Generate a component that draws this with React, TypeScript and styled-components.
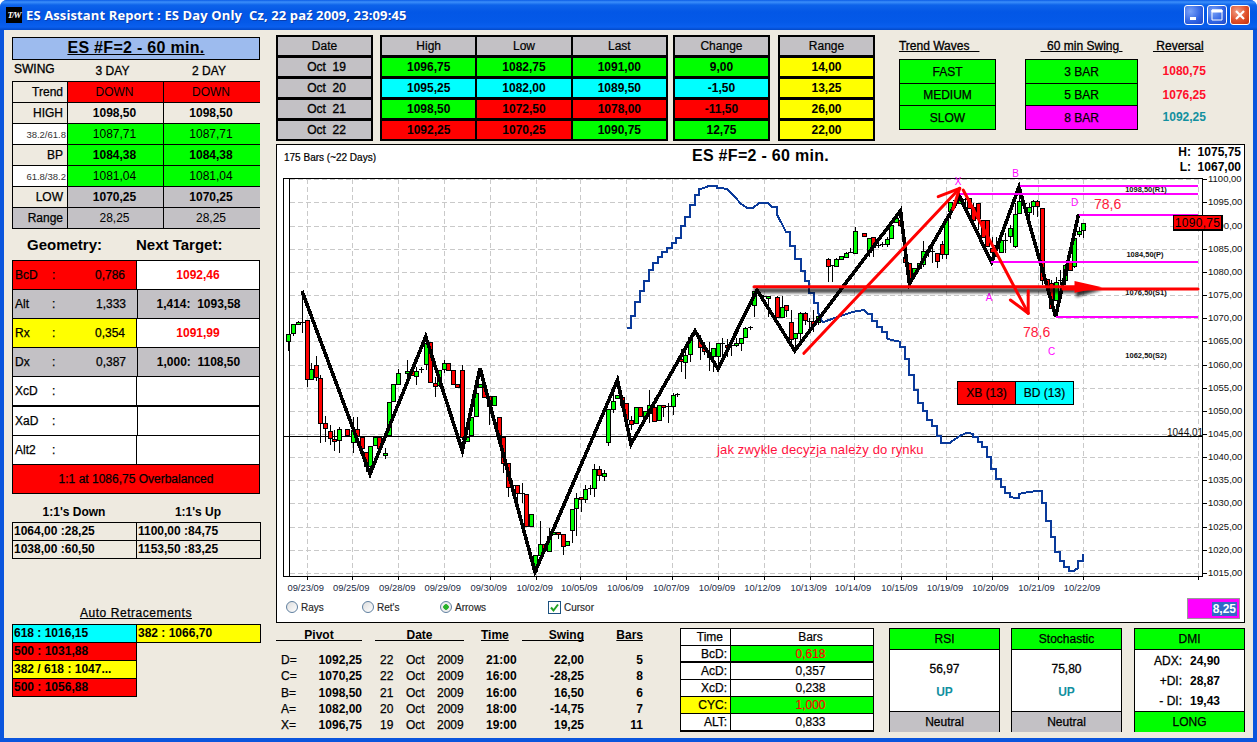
import React from 'react';
import styled, { createGlobalStyle } from 'styled-components';

const RED = '#ff0000', GREEN = '#00ff00', CYAN = '#00ffff', YELLOW = '#ffff00', MAGENTA = '#ff00ff', GRAY = '#c3c1c5', PAPER = '#eeeae0', TEAL = '#12909f';

const Global = createGlobalStyle`
  html, body { margin: 0; padding: 0; background: #fff; overflow: hidden; }
  body { font-family: "Liberation Sans", Arial, sans-serif; font-size: 12px; color: #000; }
`;

const Window = styled.div`
  width: 1257px; height: 742px; display: flex; flex-direction: column; overflow: hidden;
  border-radius: 7px 7px 0 0; background: #0a55dd;
`;
const TitleBar = styled.header`
  height: 30px; flex: none; display: flex; align-items: center; padding: 0 7px 0 6px; box-sizing: border-box;
  background: linear-gradient(180deg, #0a5ce6 0, #3b8ffa 2px, #0d63ea 5px, #0357e6 12px, #0459e8 22px, #0a5fee 27px, #0349c8 30px);
`;
const AppIcon = styled.span`
  width: 16px; height: 16px; background: #000; color: #fff; font: italic bold 9px "Liberation Serif", serif;
  display: flex; align-items: center; justify-content: center; letter-spacing: -1px; flex: none; margin-right: 4px;
`;
const TitleText = styled.span`
  font: bold 13px "Open Sans", "Liberation Sans", sans-serif; color: #fff; white-space: pre; text-shadow: 1px 1px 0 #0a3fb0; letter-spacing: 0.12px;
`;
const WinButtons = styled.div`
  margin-left: auto; display: flex; gap: 3px;
`;
const WinButton = styled.button<{ $close?: boolean }>`
  width: 20px; height: 20px; padding: 0; border: 1px solid #fff; border-radius: 3px; display: flex; align-items: center; justify-content: center;
  background: ${p => p.$close ? 'radial-gradient(circle at 35% 30%, #f0a088, #e0502a 55%, #c22f0c)' : 'radial-gradient(circle at 30% 30%, #7aa2f8, #2f62e2 60%, #1c47c8)'};
`;

const Body = styled.main`
  flex: 1; margin: 0 4px 4px 4px; background: ${PAPER}; display: flex; padding: 5px 0 0 8px; gap: 16px; min-height: 0;
`;

/* ---------- left column ---------- */
const LeftCol = styled.aside`
  width: 248px; flex: none; padding-top: 2px; display: flex; flex-direction: column;
`;
const Banner = styled.h1`
  margin: 0; height: 23px; box-sizing: border-box; border: 1px solid #000; background: #9dbbee; text-align: center;
  font: bold 16px/20px "Liberation Sans", sans-serif; text-decoration: underline; letter-spacing: 0.3px;
`;
const SwingHead = styled.div`
  height: 21px; display: grid; grid-template-columns: 55px 96px 97px; align-items: center; font-size: 12px;
`;
const SwingHeadCell = styled.span<{ $left?: boolean }>`
  text-align: ${p => p.$left ? 'left' : 'center'}; padding: ${p => p.$left ? '0 0 3px 2px' : '0 5px 0 0'};
  -webkit-text-stroke: 0.3px #000;
`;
const TrendGrid = styled.div`
  height: 148px; box-sizing: border-box; background: #000; padding: 1px; display: grid;
  grid-template-columns: 54px 95px 96px; grid-auto-rows: 20px; gap: 1px;
`;
const TrendLabel = styled.div<{ $bg?: string; $small?: boolean }>`
  background: ${p => p.$bg || PAPER}; display: flex; align-items: center; justify-content: flex-end;
  font-size: ${p => p.$small ? '9.5px' : '12px'}; padding-right: ${p => p.$small ? '1px' : '4px'};
  color: ${p => p.$small ? '#333' : '#000'}; -webkit-text-stroke: ${p => p.$small ? '0' : '0.25px #000'};
`;
const TrendValue = styled.div<{ $bg?: string; $bold?: boolean }>`
  background: ${p => p.$bg || PAPER}; display: flex; align-items: center; justify-content: center; padding-right: 2px;
  font-weight: ${p => p.$bold ? 'bold' : 'normal'};
`;
const GeoHead = styled.div`
  height: 31px; display: flex; align-items: center; padding-left: 15px; font: bold 15px "Liberation Sans", sans-serif;
`;
const GeoHeadLabel = styled.span`
  width: 109px;
`;
const GeoTable = styled.div`
  height: 234px; box-sizing: border-box; background: #000; padding: 1px; display: flex; flex-direction: column; gap: 1px;
`;
const GeoRow = styled.div<{ $shift?: boolean; $thick?: boolean }>`
  height: 28px; flex: none; display: grid; grid-template-columns: ${p => p.$shift ? '124px 1fr' : '123px 1fr'}; gap: 1px;
  margin-bottom: ${p => p.$thick ? '1px' : '0'};
`;
const GeoLeft = styled.div<{ $bg?: string }>`
  background: ${p => p.$bg || '#fff'}; display: grid; grid-template-columns: 37px auto 1fr; align-items: center; padding: 0 11px 0 2px;
  -webkit-text-stroke: 0.25px #000;
`;
const GeoVal = styled.span`
  text-align: right;
`;
const GeoRight = styled.div<{ $bg?: string; $color?: string }>`
  background: ${p => p.$bg || '#fff'}; color: ${p => p.$color || '#000'}; display: flex; align-items: center; justify-content: center; font-weight: bold; white-space: pre;
`;
const GeoFoot = styled.div`
  flex: 1; background: ${RED}; display: flex; align-items: center; justify-content: center; -webkit-text-stroke: 0.25px #000;
`;
const OneHead = styled.div`
  height: 28px; display: grid; grid-template-columns: 124px 124px; align-items: end; font-weight: bold; text-align: center; padding-bottom: 3px; box-sizing: border-box;
`;
const BoxGrid = styled.div`
  display: grid; grid-template-columns: 124px 124px; grid-auto-rows: 18px; padding: 1px 0 0 1px; box-sizing: border-box;
`;
const BoxCell = styled.div<{ $bg?: string }>`
  background: ${p => p.$bg || 'transparent'}; border: 1px solid #000; margin: -1px 0 0 -1px; font-weight: bold; padding-left: 1px; line-height: 16px; white-space: nowrap; overflow: hidden; width: 125px; box-sizing: border-box; height: 19px;
`;
const AutoHead = styled.div`
  margin-top: 46px; height: 19px; text-align: center; text-decoration: underline; line-height: 16px; -webkit-text-stroke: 0.25px #000; letter-spacing: .55px;
`;

/* ---------- right column ---------- */
const RightCol = styled.div`
  width: 969px; flex: none; display: flex; flex-direction: column;
`;
const TopRow = styled.section`
  height: 106px; flex: none; display: flex;
`;
const Frame = styled.div<{ $cols: number; $cellW: number; $ml?: number }>`
  background: #000; padding: 2px; box-sizing: border-box; height: 106px; display: grid; gap: 3px 2px;
  grid-template-columns: repeat(${p => p.$cols}, ${p => p.$cellW}px); grid-auto-rows: 18px; margin-left: ${p => p.$ml || 0}px;
`;
const FrameHead = styled.div`
  background: ${GRAY}; display: flex; align-items: center; justify-content: center; font-size: 12px; -webkit-text-stroke: 0.2px #000;
`;
const FrameCell = styled.div<{ $bg: string }>`
  background: ${p => p.$bg}; display: flex; align-items: center; justify-content: center; font-weight: bold;
`;
const OctCell = styled(FrameCell)`
  font-weight: normal; -webkit-text-stroke: 0.35px #000; white-space: pre; padding-left: 4px;
`;
const SideCol = styled.div<{ $w: number; $ml: number }>`
  width: ${p => p.$w}px; margin-left: ${p => p.$ml}px; display: flex; flex-direction: column; flex: none;
`;
const SideHead = styled.div<{ $center?: boolean }>`
  height: 24px; display: flex; align-items: center; justify-content: ${p => p.$center ? 'center' : 'flex-start'}; padding-bottom: 3px; box-sizing: border-box;
  white-space: pre; text-decoration: underline; -webkit-text-stroke: 0.3px #000;
`;
const WaveGrid = styled.div`
  background: #000; padding: 1px; display: grid; grid-template-rows: 23px 21px 23px; gap: 1px; height: 71px; box-sizing: border-box;
`;
const WaveCell = styled.div<{ $bg?: string }>`
  background: ${p => p.$bg || GREEN}; display: flex; align-items: center; justify-content: center; -webkit-text-stroke: 0.25px #000;
`;
const ReversalList = styled.div`
  display: grid; grid-template-rows: 24px 22px 25px; height: 71px;
`;
const ReversalValue = styled.div<{ $color: string }>`
  color: ${p => p.$color}; font-weight: bold; text-align: right; line-height: 24px;
`;

const ChartPanel = styled.section`
  margin-top: 3px; height: 479px; flex: none; box-sizing: border-box; border: 1px solid #000; background: #fff; display: flex; flex-direction: column; position: relative;
`;
const ChartHeader = styled.div`
  height: 27px; flex: none; display: grid; grid-template-columns: 1fr auto 1fr; position: relative; z-index: 1;
`;
const BarsNote = styled.span`
  font-size: 10px; padding: 7px 0 0 7px; -webkit-text-stroke: 0.2px #000;
`;
const ChartTitle = styled.h2`
  margin: 0; font: bold 16px/20px "Liberation Sans", sans-serif; padding-top: 1px; letter-spacing: 0.3px;
`;
const HiLo = styled.div`
  justify-self: end; display: grid; grid-template-columns: auto 44px; column-gap: 6px; grid-auto-rows: 15px; font-weight: bold; padding: 0 3px 0 0; line-height: 15px; text-align: right;
`;
const Plot = styled.svg`
  display: block; width: 967px; height: 424px; flex: none; overflow: visible;
  text { font-family: "Liberation Sans", Arial, sans-serif; }
`;
const LastPrice = styled.div`
  position: absolute; left: 896px; top: 70px; width: 50px; height: 16px; box-sizing: border-box; background: ${RED}; border: 1px solid #000; border-width: 1px 2px 2px 1px;
  display: flex; align-items: center; justify-content: center; font-size: 12px; line-height: 12px; letter-spacing: 0.3px;
`;
const SignalBox = styled.div`
  position: absolute; left: 680px; top: 236px; display: grid; grid-template-columns: 57px 57px; height: 24px; background: #000; padding: 1px; gap: 1px; box-sizing: border-box;
`;
const SignalCell = styled.div<{ $bg: string }>`
  background: ${p => p.$bg}; display: flex; align-items: center; justify-content: center; -webkit-text-stroke: 0.2px #000;
`;
const Controls = styled.div`
  height: 26px; flex: none; display: flex; align-items: center; padding-left: 9px; font-size: 10px; color: #222;
`;
const ControlItem = styled.label<{ $w: number }>`
  width: ${p => p.$w}px; display: flex; align-items: center; gap: 3px; flex: none; padding-bottom: 4px; -webkit-text-stroke: 0.15px #333;
`;
const Radio = styled.span<{ $on?: boolean }>`
  width: 12px; height: 12px; box-sizing: border-box; border-radius: 50%; border: 1px solid #5f7f9f; flex: none;
  background: ${p => p.$on ? `radial-gradient(circle, #29b229 0, #29b229 2.5px, #eee 3px)` : 'linear-gradient(135deg,#ddd,#fff)'};
`;
const Check = styled.span`
  width: 13px; height: 13px; box-sizing: border-box; border: 1px solid #1c5180; background: #fff; flex: none; display: flex; align-items: center; justify-content: center;
`;
const SpreadBox = styled.div`
  margin: -1px 4px 0 auto; width: 53px; height: 21px; box-sizing: border-box; border: 1px solid #999; background: ${MAGENTA}; display: flex; align-items: center; justify-content: flex-end; padding-right: 2px;
`;
const SpreadValue = styled.span`
  background: #316ac5; color: #fff; font-weight: bold; font-size: 12px; line-height: 14px; padding: 0 1px;
`;

const BottomRow = styled.section`
  margin-top: 5px; display: flex; flex: none;
`;
const PivotGrid = styled.div`
  width: 367px; flex: none; display: grid; grid-auto-rows: 16.25px; margin-top: -1px;
  grid-template-columns: 86px 13px 89px 17px 35px 6px 62px 32px 27px;
  grid-template-rows: 14px 11px;
`;
const PivotHead = styled.div<{ $col: number; $align?: string; $full?: boolean }>`
  grid-column: ${p => p.$col}; grid-row: 1; font-weight: bold; text-align: ${p => p.$align || 'center'}; line-height: 17px; height: 14px; box-sizing: border-box;
  ${p => p.$full ? 'border-bottom: 1px solid #000;' : 'text-decoration: underline;'}
`;
const PivotSpacer = styled.div`
  grid-column: 1 / -1; grid-row: 2;
`;
const PivotLabelCell = styled.div`
  grid-column: 1; display: flex; justify-content: space-between; padding-left: 5px; font-weight: bold; line-height: 16px;
`;
const PivotLetter = styled.span`
  font-weight: normal; -webkit-text-stroke: 0.25px #000;
`;
const PivotDate = styled.div`
  grid-column: 3; display: grid; grid-template-columns: 26px 31px 1fr; padding-left: 5px; line-height: 16px; -webkit-text-stroke: 0.25px #000;
`;
const PivotTime = styled.div`
  grid-column: 5; font-weight: bold; line-height: 16px; padding-left: 5px; white-space: nowrap;
`;
const PivotNum = styled.div<{ $col: number }>`
  grid-column: ${p => p.$col}; font-weight: bold; line-height: 16px; text-align: right;
`;
const TimeTable = styled.div`
  width: 194px; height: 104px; flex: none; margin-left: 37px; background: #000; padding: 1px; box-sizing: border-box; display: grid; grid-template-columns: 49px 1fr; grid-auto-rows: 16px; gap: 1px;
`;
const TimeLabel = styled.div<{ $bg?: string; $thick?: boolean; $head?: boolean }>`
  background: ${p => p.$bg || '#fff'}; text-align: right; padding-right: ${p => p.$head ? '7px' : '3px'}; line-height: 16px; -webkit-text-stroke: 0.25px #000; margin-bottom: ${p => p.$thick ? '1px' : 0};
`;
const TimeValue = styled.div<{ $bg?: string; $color?: string; $thick?: boolean }>`
  background: ${p => p.$bg || '#fff'}; color: ${p => p.$color || '#000'}; text-align: center; padding-left: 17px; line-height: 16px; margin-bottom: ${p => p.$thick ? '1px' : 0}; -webkit-text-stroke: 0.2px ${p => p.$color || '#000'};
`;
const Card = styled.div<{ $ml: number }>`
  width: 111px; height: 104px; flex: none; margin-left: ${p => p.$ml}px; background: #000; padding: 1px; box-sizing: border-box; display: grid; grid-template-rows: 20px 61px 20px; gap: 1px;
`;
const CardHead = styled.div<{ $bg: string }>`
  background: ${p => p.$bg}; display: flex; align-items: center; justify-content: center; -webkit-text-stroke: 0.25px #000;
`;
const CardBody = styled.div`
  background: #fff; display: flex; flex-direction: column; align-items: center; justify-content: center; line-height: 23px;
`;
const CardValue = styled.span`
  -webkit-text-stroke: 0.3px #000;
`;
const CardUp = styled.span`
  color: ${TEAL}; font-weight: bold;
`;
const DmiBody = styled.div`
  background: #fff; display: grid; grid-template-columns: 47px 30px; column-gap: 8px; grid-auto-rows: 20px; align-content: center; font-weight: bold; line-height: 20px;
`;
const DmiLabel = styled.span`
  text-align: right; font-weight: normal; -webkit-text-stroke: 0.3px #000;
`;

/* ---------- chart data (read from the picture) ---------- */
type Pt = [number, number];
type Candle = [number, number, number, 'g' | 'r', number?, number?];
const z6 = (x: number, y: number): Pt => [280 + x / 3, 170 + y / 3];
const z8 = (x: number, y: number): Pt => [280 + x / 3, 380 + y / 3];
const z7 = (x: number, y: number): Pt => [720 + x / 2.92, 170 + y / 3];
const z9 = (x: number, y: number): Pt => [720 + x / 2.92, 380 + y / 3];
const z12 = (x: number, y: number): Pt => [500 + x / 3, 280 + y / 3];
const flat = (a: number[], f: (x: number, y: number) => Pt) => {
  const r: Pt[] = [];
  for (let i = 0; i < a.length; i += 2) r.push(f(a[i], a[i + 1]));
  return r;
};
const poly = (p: Pt[]) => p.map(q => `${q[0].toFixed(1)},${q[1].toFixed(1)}`).join(' ');

const blue: Pt[] = [
  ...flat([1040,474,1052,474,1052,438,1065,438,1065,396,1079,396,1079,363,1092,363,1092,332,1106,332,1106,301,1119,301,1119,280,1133,280,1133,261,1147,261,1147,246,1161,246,1161,233,1175,233,1175,218,1189,218,1189,204,1203,204,1203,168,1216,168,1216,141,1230,141,1230,105,1244,105,1244,75,1258,75,1258,58,1272,54,1289,47,1312,47,1312,54], z6),
  ...flat([0,53,20,57,33,70,47,85,60,100,80,115,95,115,115,98,140,98,153,112,167,112,167,135,180,160,192,185,205,185,205,227,220,227,220,268,235,268,235,303,247,303,247,332,260,332,260,370,273,370,273,400,287,400,287,430,300,457,345,440,390,425,420,420,432,432,445,432,445,452,458,452,458,470,472,470,472,487,487,487,487,505,500,510,525,515,525,530,540,530,540,568,552,568,552,615,567,615], z7),
  ...flat([566,0,566,30,578,30,578,68,592,68,592,92,605,92,605,120,620,120,620,137,634,137,634,168,645,168,645,188,670,190,685,178,700,168,720,158,740,162,740,172,753,172,753,185,766,185,766,200,780,200,780,230,792,230,792,267,805,267,805,296,820,296,820,320,833,320,833,338,847,338,847,352,872,354,872,342,900,336,940,332,940,368,952,368,952,422,966,422,966,472,978,472,978,515,992,515,992,542,1005,542,1005,560,1018,560,1018,574,1032,574,1045,564,1045,543,1060,543,1060,522], z9),
];

const zigzag: Pt[] = [[302,291],[370,474],[425.7,336.7],[462.3,450.7],[480,368],[535,572],[617.5,380],[631,444],[695,331],[718,369],[757,290],[794.7,350.7],[900.5,210.7],[909.4,284],[959.7,196.7],[991.6,262.3],[1019,186.7],[1055.6,316.7],[1078.6,214.3]];

const candlesA: Candle[] = [[25,493,515,'g',493,543],[40,463,490,'g',463,497],[53,457,463,'g',452,463],[67,455,456,'g',362,488],[80,450,628,'r',450,650],[93,598,628,'g',580,628],[107,586,622,'r',558,632],[121,625,760,'r',615,818],[355,610,642,'g',598,642],[382,604,610,'g',570,625],[396,604,617,'r'],[409,604,618,'g',590,645],[422,598,599,'g',590,610],[437,518,580,'g',518,600],[451,517,637,'r'],[464,640,648,'r',620,680],[478,600,645,'g',600,650],[491,580,598,'g',570,610],[505,578,598,'r',578,600],[518,600,643,'r',600,643],[532,643,652,'r'],[547,600,800,'r',585,810]];
const candlesB: Candle[] = [[136,130,145,'r',108,185],[149,152,172,'r',135,195],[163,178,185,'r',150,212],[176,146,178,'g',140,218],[202,148,167,'r'],[218,150,185,'g',110,218],[232,148,168,'r',110,168],[245,172,205,'r'],[259,215,258,'r',215,275],[271,197,258,'g',197,282],[286,170,194,'g'],[298,172,205,'r',172,225],[314,218,223,'g',205,237],[326,67,165,'g'],[340,13,65,'g'],[560,172,185,'g'],[574,112,167,'g'],[587,40,108,'g'],[600,12,20,'g'],[613,15,52,'r'],[628,48,78,'r',48,135],[642,48,76,'g'],[656,112,165,'r'],[670,170,248,'r',170,278],[684,248,320,'r',248,350],[697,316,318,'r',300,340],[710,316,340,'r',316,370],[725,340,341,'r',308,370],[739,343,440,'r'],[752,403,440,'g'],[766,526,573,'g'],[779,492,524,'g',422,530],[793,492,510,'r'],[806,467,512,'g',445,512],[820,457,462,'g'],[834,455,460,'r',455,478],[848,463,498,'r',463,525],[862,484,496,'g'],[875,388,452,'g',388,490],[889,355,385,'g',340,468],[902,351,358,'r',351,395],[916,328,358,'g',315,370],[930,325,326,'g',315,345],[943,268,325,'g',252,352],[957,268,287,'r',258,302],[971,280,290,'g',270,302],[985,88,187,'g',88,198],[998,62,85,'g',40,100],[1012,46,55,'g'],[1025,50,74,'r'],[1039,70,118,'r',70,150],[1053,120,131,'r',108,150],[1067,82,130,'g'],[1081,82,108,'r'],[1094,93,115,'g'],[1108,76,100,'g',30,130],[1121,80,122,'r',55,125],[1136,76,122,'g'],[1150,76,82,'r',76,110],[1164,78,79,'r',70,128],[1178,46,80,'g',38,105],[1190,42,43,'g',38,50]];
const candlesC: Candle[] = [[543,238,245,'r',208,275],[556,224,245,'g',205,298],[571,172,222,'g',172,245],[599,180,200,'r',165,240],[613,200,212,'r',185,225],[627,215,230,'r',185,272],[640,203,228,'g',203,275],[654,190,230,'g',190,258]];
const candlesD: Candle[] = [[7,520,521,'g',505,560],[20,524,531,'r',507,560],[33,525,526,'g',510,558],[46,518,525,'g',505,530],[60,503,518,'g',503,542],[74,473,500,'g',470,503],[87,470,471,'g',468,480],[100,362,403,'g',362,440],[127,378,379,'g',375,392],[140,378,385,'g',378,440],[167,380,440,'r',378,440],[180,410,440,'g',378,440],[193,406,422,'r',406,440],[207,455,505,'r',420,520],[220,490,505,'g',490,535],[234,428,488,'g',425,510],[247,430,450,'r',425,465],[260,452,453,'g',445,478],[273,452,460,'r',420,485],[287,437,455,'g',437,465],[314,268,288,'r',265,337],[327,285,286,'g',285,335],[340,268,288,'g',265,290],[353,257,265,'g'],[367,248,260,'g',245,265],[380,245,246,'g',235,250],[393,183,248,'g',170,250],[420,188,197,'r'],[434,205,248,'g',205,260],[447,202,232,'r',202,262],[460,225,226,'g',210,235],[473,222,223,'g',215,232],[487,208,222,'g',200,232],[500,165,203,'g',150,205],[513,143,155,'g',135,160],[527,150,165,'r',140,170],[540,262,278,'r'],[553,280,335,'r',280,340],[567,295,312,'g'],[580,280,295,'g'],[594,242,280,'g',212,290],[607,240,241,'g',228,262],[620,243,244,'g',215,280],[634,250,275,'r',250,295],[647,223,253,'r',212,268],[660,150,253,'g',150,268],[673,97,125,'g',97,148],[687,90,91,'g',85,110],[700,85,100,'g'],[714,88,89,'g',85,110],[727,85,115,'r'],[740,112,150,'r',100,150],[753,100,145,'r',100,180],[767,150,200,'r'],[780,150,228,'r',150,232],[793,233,245,'r',200,260],[807,225,226,'g',200,260],[820,210,247,'g',200,250],[833,210,211,'g',190,250],[848,175,200,'g',165,220],[860,133,228,'g',100,235],[874,92,127,'g',60,130],[887,100,101,'g',90,130],[901,112,127,'g',100,140],[914,92,108,'g',90,135],[927,92,108,'r',90,140],[941,113,328,'r',113,345],[954,328,350,'r'],[967,340,415,'r',330,410],[981,335,388,'g',320,388],[994,330,331,'g',300,345],[1007,285,330,'g',285,345],[1021,275,300,'r'],[1035,205,290,'g',205,295],[1048,183,192,'g',170,200],[1061,158,180,'g',158,203]];

const Candles = ({ data, at }: { data: Candle[]; at: (x: number, y: number) => Pt }) => (
  <g shapeRendering="crispEdges">
    {data.map((c, i) => {
      const [x, t] = at(c[0], c[1]);
      const [, b] = at(c[0], c[2]);
      const [, wt] = at(c[0], c[4] ?? c[1]);
      const [, wb] = at(c[0], c[5] ?? c[2]);
      const rx = Math.round(x);
      const doji = b - t < 1.5;
      return (
        <g key={i}>
          <line x1={rx + 0.5} x2={rx + 0.5} y1={wt} y2={wb} stroke="#000" />
          {doji
            ? <line x1={rx - 2} x2={rx + 3} y1={Math.round(t) + 0.5} y2={Math.round(t) + 0.5} stroke="#000" />
            : <rect x={rx - 1.5} width={4} y={Math.round(t) + 0.5} height={Math.max(1, Math.round(b - t))} fill={c[3] === 'g' ? GREEN : RED} stroke="#000" />}
        </g>
      );
    })}
  </g>
);

const gridX = [306.7,352.3,398.3,443.7,489.7,535.7,580.3,626.3,672.3,718,763.5,809.7,854,900.5,946,991.6,1037.5,1083,1197.7];
const dateLabels = ['09/23/09','09/25/09','09/28/09','09/29/09','09/30/09','10/02/09','10/05/09','10/06/09','10/07/09','10/09/09','10/12/09','10/13/09','10/14/09','10/15/09','10/19/09','10/20/09','10/21/09','10/22/09'];
const levels = Array.from({ length: 18 }, (_, i) => 1100 - i * 5);
const yOf = (v: number) => Math.round(179.3 + (1100 - v) * 4.63);

const PriceChart = () => (
  <Plot viewBox="277 172 967 424">
    <defs>
      <filter id="soft" filterUnits="userSpaceOnUse" x="740" y="270" width="380" height="40"><feGaussianBlur stdDeviation="1.6" /></filter>
    </defs>
    <g shapeRendering="crispEdges" stroke="#c9c9c9" strokeDasharray="5 3">
      {levels.map(v => <line key={v} x1={290} x2={1198} y1={yOf(v) + 0.5} y2={yOf(v) + 0.5} />)}
      {gridX.map(x => <line key={x} x1={Math.round(x) + 0.5} x2={Math.round(x) + 0.5} y1={179} y2={576} />)}
    </g>
    <g shapeRendering="crispEdges" stroke="#000" fill="none">
      <rect x={283.5} y={178.5} width={919} height={398} />
      <line x1={289.5} x2={289.5} y1={178} y2={576} />
      <line x1={283} x2={1202} y1={436.5} y2={436.5} />
      {levels.map(v => <line key={v} x1={1203} x2={1207} y1={yOf(v) + 0.5} y2={yOf(v) + 0.5} />)}
      {gridX.map(x => <line key={x} x1={Math.round(x) + 0.5} x2={Math.round(x) + 0.5} y1={577} y2={580} />)}
    </g>
    <polyline points={poly(blue)} fill="none" stroke="#0a3a9a" strokeWidth={2} shapeRendering="crispEdges" />
    <Candles data={candlesA} at={z6} />
    <Candles data={candlesB} at={z8} />
    <Candles data={candlesC} at={z12} />
    <Candles data={candlesD} at={z7} />
    <polyline points={poly(zigzag)} fill="none" stroke="#000" strokeWidth={3.6} shapeRendering="crispEdges" strokeLinejoin="miter" />
    <g stroke={MAGENTA} strokeWidth={2} shapeRendering="crispEdges">
      <line x1={1019.6} x2={1198} y1={186} y2={186} />
      <line x1={960} x2={1198} y1={194} y2={194} />
      <line x1={1078.6} x2={1198} y1={215} y2={215} />
      <line x1={991} x2={1198} y1={262} y2={262} />
      <line x1={1055.6} x2={1198} y1={317} y2={317} />
    </g>
    <g fontSize={10} fill={MAGENTA} textAnchor="middle">
      <text x={958} y={185}>X</text>
      <text x={989} y={301}>A</text>
      <text x={1015.5} y={177}>B</text>
      <text x={1051.5} y={355}>C</text>
      <text x={1074.5} y={206}>D</text>
    </g>
    <g fontSize={7.5} fontWeight="bold" fill="#111" textAnchor="middle">
      <text x={1146} y={192}>1098,50(R1)</text>
      <text x={1145} y={257}>1084,50(P)</text>
      <text x={1146} y={295}>1076,50(S1)</text>
      <text x={1146} y={358}>1062,50(S2)</text>
    </g>
    <text x={1167} y={436} fontSize={10} fill="#111">1044,01</text>
    <rect x={754} y={288} width={322} height={5} fill="#000" opacity={0.7} filter="url(#soft)" />
    <polygon points="1076,286 1102,290 1076,297" fill="#111" opacity={0.85} filter="url(#soft)" />
    <g stroke={RED} strokeWidth={3} fill="none" strokeLinecap="round" strokeLinejoin="round">
      <polyline points={poly(flat([245,550,700,55], z7))} />
      <polyline points={poly(flat([637,80,700,55,680,118], z7))} />
      <polyline points={poly(flat([710,60,900,430], z7))} />
      <polyline points={poly(flat([848,390,900,430,900,362], z7))} />
      <line x1={754} x2={1075} y1={286.7} y2={286.7} />
      <line x1={1063} x2={1198} y1={289} y2={289} />
    </g>
    <polygon points="1074.5,281 1102,287.3 1074.5,292.7" fill={RED} />
    <text x={1094} y={209} fontSize={14} fill="#ff1a3c">78,6</text>
    <text x={1023} y={337} fontSize={14} fill="#ff1a3c">78,6</text>
    <text x={717} y={454} fontSize={13} fill="#ff1040" letterSpacing={0.15}>jak zwykle decyzja należy do rynku</text>
    <g fontSize={9.5} fill="#111">
      {levels.map(v => <text key={v} x={1208} y={yOf(v) + 3}>{`${v},00`}</text>)}
    </g>
    <g fontSize={9.4} fill="#1a2a44" textAnchor="middle">
      {dateLabels.map((d, i) => <text key={d} x={gridX[i] - 1} y={591}>{d}</text>)}
    </g>
  </Plot>
);

/* ---------- content data ---------- */
const trendRows: { label: string; small?: boolean; labelBg?: string; bg?: string; bold?: boolean; v: string }[] = [
  { label: 'HIGH', v: '1098,50', bold: true },
  { label: '38.2/61.8', small: true, labelBg: '#fff', bg: GREEN, v: '1087,71' },
  { label: 'BP', bg: GREEN, v: '1084,38', bold: true },
  { label: '61.8/38.2', small: true, labelBg: '#fff', bg: GREEN, v: '1081,04' },
  { label: 'LOW', bg: GRAY, v: '1070,25', bold: true },
  { label: 'Range', labelBg: GRAY, bg: GRAY, v: '28,25' },
];
const geoRows: { l: string; v?: string; r?: string; bg?: string; rbg?: string; rc?: string; shift?: boolean; thick?: boolean }[] = [
  { l: 'BcD', v: '0,786', r: '1092,46', bg: RED, rc: RED },
  { l: 'Alt', v: '1,333', r: '1,414:  1093,58', bg: GRAY, rbg: GRAY, shift: true },
  { l: 'Rx', v: '0,354', r: '1091,99', bg: YELLOW, rc: RED },
  { l: 'Dx', v: '0,387', r: '1,000:  1108,50', bg: GRAY, rbg: GRAY, shift: true },
  { l: 'XcD', thick: true },
  { l: 'XaD', shift: true },
  { l: 'Alt2' },
];
const market = [
  { date: 'Oct  19', c: [[GREEN, '1096,75'], [GREEN, '1082,75'], [GREEN, '1091,00']], ch: [GREEN, '9,00'], rg: '14,00' },
  { date: 'Oct  20', c: [[CYAN, '1095,25'], [CYAN, '1082,00'], [CYAN, '1089,50']], ch: [CYAN, '-1,50'], rg: '13,25' },
  { date: 'Oct  21', c: [[GREEN, '1098,50'], [RED, '1072,50'], [RED, '1078,00']], ch: [RED, '-11,50'], rg: '26,00' },
  { date: 'Oct  22', c: [[RED, '1092,25'], [RED, '1070,25'], [GREEN, '1090,75']], ch: [GREEN, '12,75'], rg: '22,00' },
];
const pivots = [
  ['D=', '1092,25', '22', '21:00', '22,00', '5'],
  ['C=', '1070,25', '22', '16:00', '-28,25', '8'],
  ['B=', '1098,50', '21', '16:00', '16,50', '6'],
  ['A=', '1082,00', '20', '18:00', '-14,75', '7'],
  ['X=', '1096,75', '19', '19:00', '19,25', '11'],
];
const times: { l: string; v: string; lbg?: string; bg?: string; c?: string; thick?: boolean }[] = [
  { l: 'BcD:', v: '0,618', bg: GREEN, c: RED, thick: true },
  { l: 'AcD:', v: '0,357' },
  { l: 'XcD:', v: '0,238' },
  { l: 'CYC:', v: '1,000', lbg: YELLOW, bg: GREEN, c: RED },
  { l: 'ALT:', v: '0,833' },
];

export default function App() {
  return (
    <>
      <Global />
      <Window>
        <TitleBar>
          <AppIcon>T/W</AppIcon>
          <TitleText>{'ES Assistant Report : ES Day Only  Cz, 22 paź 2009, 23:09:45'}</TitleText>
          <WinButtons>
            <WinButton aria-label="minimize">
              <svg width="12" height="12"><rect x="2" y="8" width="6" height="3" fill="#fff" /></svg>
            </WinButton>
            <WinButton aria-label="maximize">
              <svg width="14" height="14"><path d="M2 2h10v10H2z M2 2h10v2H2z" fill="none" stroke="#fff" strokeWidth="1" /><rect x="2" y="2" width="10" height="2" fill="#fff" /></svg>
            </WinButton>
            <WinButton $close aria-label="close">
              <svg width="12" height="12"><path d="M2 2l8 8M10 2l-8 8" stroke="#fff" strokeWidth="2.2" /></svg>
            </WinButton>
          </WinButtons>
        </TitleBar>
        <Body>
          <LeftCol>
            <Banner>ES #F=2 - 60 min.</Banner>
            <SwingHead>
              <SwingHeadCell $left>SWING</SwingHeadCell>
              <SwingHeadCell>3 DAY</SwingHeadCell>
              <SwingHeadCell>2 DAY</SwingHeadCell>
            </SwingHead>
            <TrendGrid>
              <TrendLabel>Trend</TrendLabel>
              <TrendValue $bg={RED}>DOWN</TrendValue>
              <TrendValue $bg={RED}>DOWN</TrendValue>
              {trendRows.map(r => (
                <React.Fragment key={r.label}>
                  <TrendLabel $bg={r.labelBg} $small={r.small}>{r.label}</TrendLabel>
                  <TrendValue $bg={r.bg} $bold={r.bold}>{r.v}</TrendValue>
                  <TrendValue $bg={r.bg} $bold={r.bold}>{r.v}</TrendValue>
                </React.Fragment>
              ))}
            </TrendGrid>
            <GeoHead>
              <GeoHeadLabel>Geometry:</GeoHeadLabel>
              <span>Next Target:</span>
            </GeoHead>
            <GeoTable>
              {geoRows.map(r => (
                <GeoRow key={r.l} $shift={r.shift} $thick={r.thick}>
                  <GeoLeft $bg={r.bg}>
                    <span>{r.l}</span>
                    <span>:</span>
                    <GeoVal>{r.v}</GeoVal>
                  </GeoLeft>
                  <GeoRight $bg={r.rbg} $color={r.rc}>{r.r}</GeoRight>
                </GeoRow>
              ))}
              <GeoFoot>1:1 at 1086,75 Overbalanced</GeoFoot>
            </GeoTable>
            <OneHead>
              <span>1:1's Down</span>
              <span>1:1's Up</span>
            </OneHead>
            <BoxGrid>
              <BoxCell>1064,00 :28,25</BoxCell>
              <BoxCell>1100,00 :84,75</BoxCell>
              <BoxCell>1038,00 :60,50</BoxCell>
              <BoxCell>1153,50 :83,25</BoxCell>
            </BoxGrid>
            <AutoHead>Auto Retracements</AutoHead>
            <BoxGrid>
              <BoxCell $bg={CYAN}>618 : 1016,15</BoxCell>
              <BoxCell $bg={YELLOW}>382 : 1066,70</BoxCell>
              <BoxCell $bg={RED}>500 : 1031,88</BoxCell>
              <span />
              <BoxCell $bg={YELLOW}>382 / 618 : 1047...</BoxCell>
              <span />
              <BoxCell $bg={RED}>500 : 1056,88</BoxCell>
            </BoxGrid>
          </LeftCol>
          <RightCol>
            <TopRow>
              <Frame $cols={1} $cellW={93}>
                <FrameHead>Date</FrameHead>
                {market.map(m => <OctCell key={m.date} $bg={GRAY}>{m.date}</OctCell>)}
              </Frame>
              <Frame $cols={3} $cellW={93.33} $ml={7}>
                <FrameHead>High</FrameHead>
                <FrameHead>Low</FrameHead>
                <FrameHead>Last</FrameHead>
                {market.flatMap(m => m.c.map((c, i) => <FrameCell key={m.date + i} $bg={c[0]}>{c[1]}</FrameCell>))}
              </Frame>
              <Frame $cols={1} $cellW={93} $ml={5}>
                <FrameHead>Change</FrameHead>
                {market.map(m => <FrameCell key={m.date} $bg={m.ch[0]}>{m.ch[1]}</FrameCell>)}
              </Frame>
              <Frame $cols={1} $cellW={93} $ml={8}>
                <FrameHead>Range</FrameHead>
                {market.map(m => <FrameCell key={m.date} $bg={YELLOW}>{m.rg}</FrameCell>)}
              </Frame>
              <SideCol $w={97} $ml={24}>
                <SideHead>{'Trend Waves   '}</SideHead>
                <WaveGrid>
                  <WaveCell>FAST</WaveCell>
                  <WaveCell>MEDIUM</WaveCell>
                  <WaveCell>SLOW</WaveCell>
                </WaveGrid>
              </SideCol>
              <SideCol $w={113} $ml={29}>
                <SideHead $center>{'  60 min Swing '}</SideHead>
                <WaveGrid>
                  <WaveCell>3 BAR</WaveCell>
                  <WaveCell>5 BAR</WaveCell>
                  <WaveCell $bg={MAGENTA}>8 BAR</WaveCell>
                </WaveGrid>
              </SideCol>
              <SideCol $w={53} $ml={15}>
                <SideHead>{' Reversal'}</SideHead>
                <ReversalList>
                  <ReversalValue $color="#ff0f2a">1080,75</ReversalValue>
                  <ReversalValue $color="#ff0f2a">1076,25</ReversalValue>
                  <ReversalValue $color={TEAL}>1092,25</ReversalValue>
                </ReversalList>
              </SideCol>
            </TopRow>
            <ChartPanel>
              <ChartHeader>
                <BarsNote>175 Bars (~22 Days)</BarsNote>
                <ChartTitle>ES #F=2 - 60 min.</ChartTitle>
                <HiLo>
                  <span>H:</span><span>1075,75</span>
                  <span>L:</span><span>1067,00</span>
                </HiLo>
              </ChartHeader>
              <PriceChart />
              <LastPrice>1090,75</LastPrice>
              <SignalBox>
                <SignalCell $bg={RED}>XB (13)</SignalCell>
                <SignalCell $bg={CYAN}>BD (13)</SignalCell>
              </SignalBox>
              <Controls>
                <ControlItem $w={76}><Radio />Rays</ControlItem>
                <ControlItem $w={78}><Radio />Ret's</ControlItem>
                <ControlItem $w={108}><Radio $on />Arrows</ControlItem>
                <ControlItem $w={60}>
                  <Check>
                    <svg width="11" height="11" viewBox="0 0 11 11"><path d="M2 5.5L4.5 8.5L9 2.5" fill="none" stroke="#21a121" strokeWidth="2" /></svg>
                  </Check>
                  Cursor
                </ControlItem>
                <SpreadBox><SpreadValue>8,25</SpreadValue></SpreadBox>
              </Controls>
            </ChartPanel>
            <BottomRow>
              <PivotGrid>
                <PivotHead $col={1} $full>Pivot</PivotHead>
                <PivotHead $col={3} $full>Date</PivotHead>
                <PivotHead $col={5} $align="left">Time</PivotHead>
                <PivotHead $col={7} $align="right" $full>Swing</PivotHead>
                <PivotHead $col={9} $align="right">Bars</PivotHead>
                <PivotSpacer />
                {pivots.map(p => (
                  <React.Fragment key={p[0]}>
                    <PivotLabelCell><PivotLetter>{p[0]}</PivotLetter>{p[1]}</PivotLabelCell>
                    <PivotDate><span>{p[2]}</span><span>Oct</span><span>2009</span></PivotDate>
                    <PivotTime>{p[3]}</PivotTime>
                    <PivotNum $col={7}>{p[4]}</PivotNum>
                    <PivotNum $col={9}>{p[5]}</PivotNum>
                  </React.Fragment>
                ))}
              </PivotGrid>
              <TimeTable>
                <TimeLabel $head>Time</TimeLabel>
                <TimeValue>Bars</TimeValue>
                {times.map(t => (
                  <React.Fragment key={t.l}>
                    <TimeLabel $bg={t.lbg} $thick={t.thick}>{t.l}</TimeLabel>
                    <TimeValue $bg={t.bg} $color={t.c} $thick={t.thick}>{t.v}</TimeValue>
                  </React.Fragment>
                ))}
              </TimeTable>
              <Card $ml={15}>
                <CardHead $bg={GREEN}>RSI</CardHead>
                <CardBody><CardValue>56,97</CardValue><CardUp>UP</CardUp></CardBody>
                <CardHead $bg={GRAY}>Neutral</CardHead>
              </Card>
              <Card $ml={11}>
                <CardHead $bg={GREEN}>Stochastic</CardHead>
                <CardBody><CardValue>75,80</CardValue><CardUp>UP</CardUp></CardBody>
                <CardHead $bg={GRAY}>Neutral</CardHead>
              </Card>
              <Card $ml={12}>
                <CardHead $bg={GREEN}>DMI</CardHead>
                <DmiBody>
                  <DmiLabel>ADX:</DmiLabel><span>24,90</span>
                  <DmiLabel>+DI:</DmiLabel><span>28,87</span>
                  <DmiLabel>- DI:</DmiLabel><span>19,43</span>
                </DmiBody>
                <CardHead $bg={GREEN}>LONG</CardHead>
              </Card>
            </BottomRow>
          </RightCol>
        </Body>
      </Window>
    </>
  );
}
